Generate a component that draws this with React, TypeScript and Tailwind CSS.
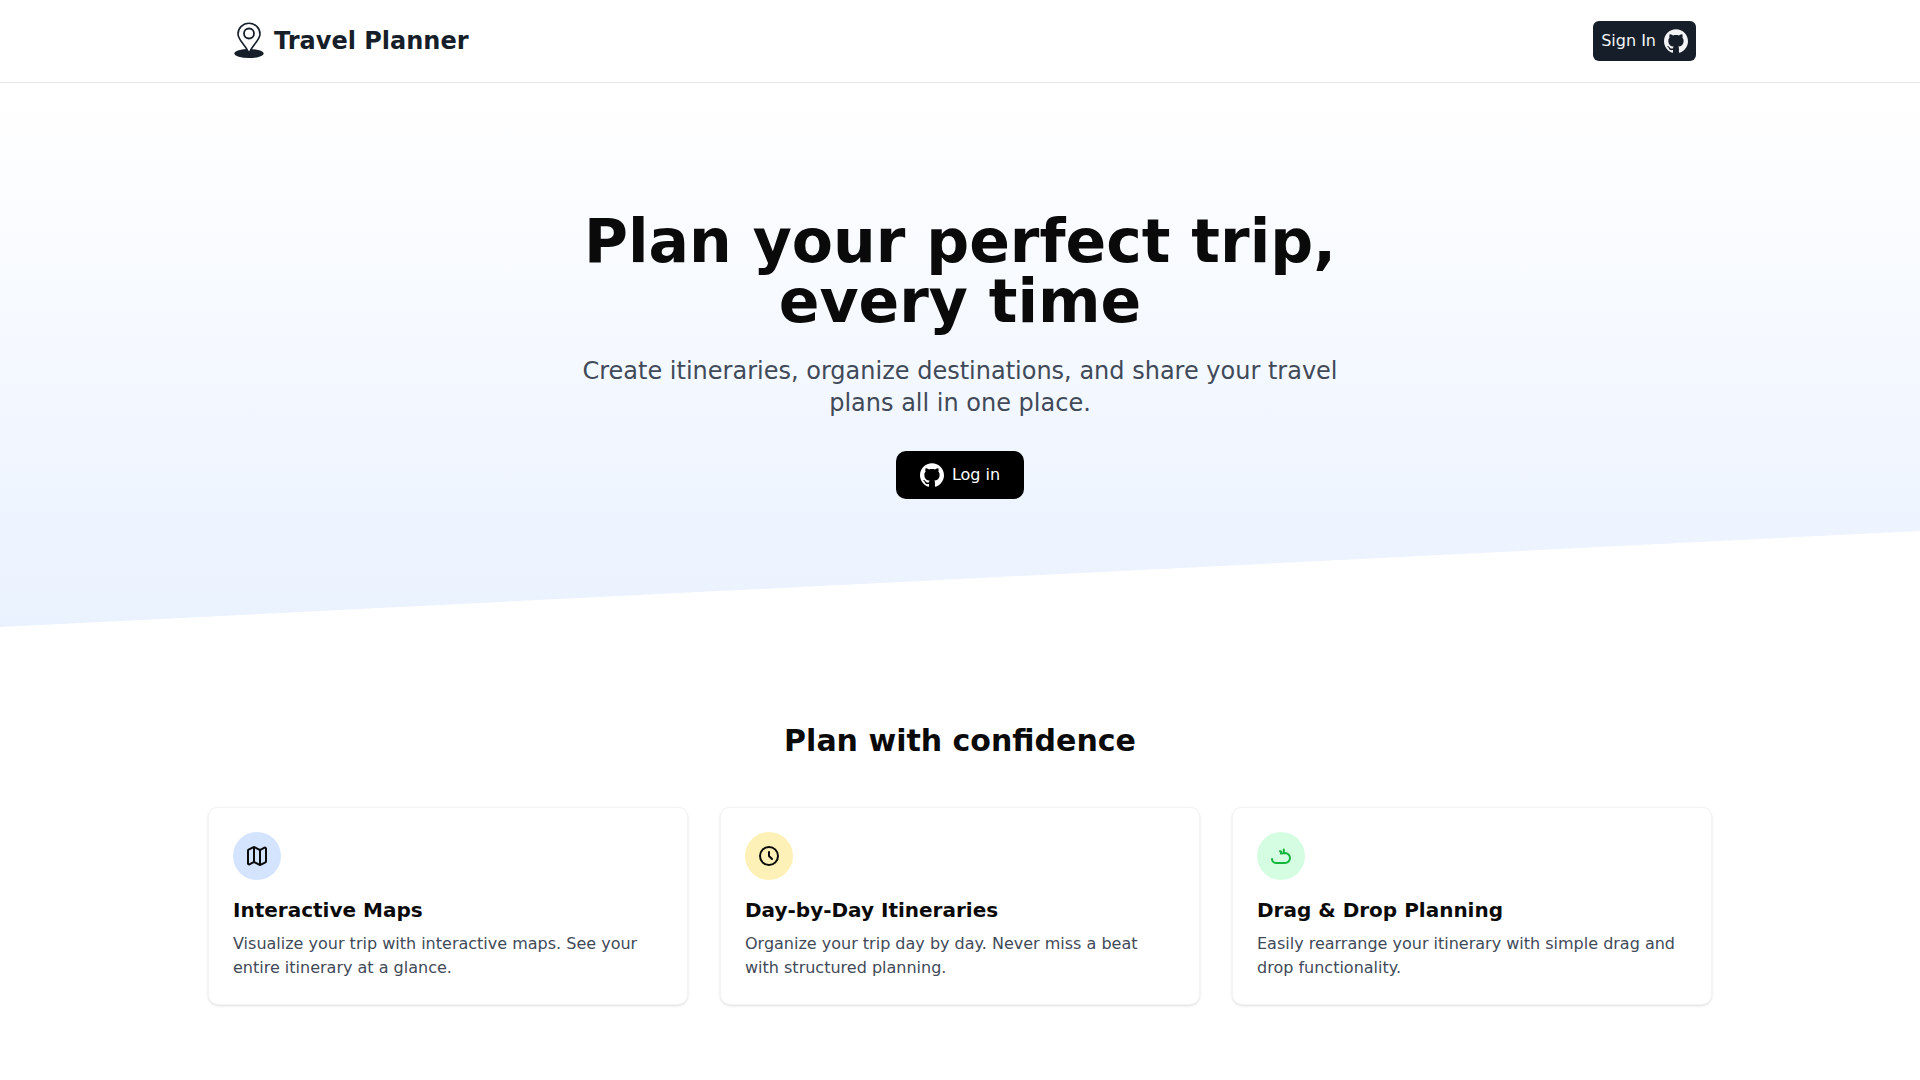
import type { ReactNode } from "react";
import { Map as MapIcon } from "lucide-react";

function LogoPin() {
  return (
    <svg viewBox="0 0 50 50" className="size-[50px]" fill="none" aria-hidden="true">
      <ellipse cx="25" cy="37.5" rx="14.6" ry="4.6" fill="#161e2a" />
      <path
        d="M25 37C21 28.5 14 24 14 18A11 10.8 0 0 1 36 18C36 24 29 28.5 25 37z"
        fill="#fff"
        stroke="#161e2a"
        strokeWidth="1.6"
      />
      <circle cx="25" cy="17.5" r="5" stroke="#161e2a" strokeWidth="1.8" />
    </svg>
  );
}

function GithubMark() {
  return (
    <svg viewBox="0 0 24 24" className="size-6" fill="currentColor" aria-hidden="true">
      <path d="M12 .297c-6.63 0-12 5.373-12 12 0 5.303 3.438 9.8 8.205 11.385.6.113.82-.258.82-.577 0-.285-.01-1.04-.015-2.04-3.338.724-4.042-1.61-4.042-1.61C4.422 18.07 3.633 17.7 3.633 17.7c-1.087-.744.084-.729.084-.729 1.205.084 1.838 1.236 1.838 1.236 1.07 1.835 2.809 1.305 3.495.998.108-.776.417-1.305.76-1.605-2.665-.3-5.466-1.332-5.466-5.93 0-1.31.465-2.38 1.235-3.22-.135-.303-.54-1.523.105-3.176 0 0 1.005-.322 3.3 1.23.96-.267 1.98-.399 3-.405 1.02.006 2.04.138 3 .405 2.28-1.552 3.285-1.23 3.285-1.23.645 1.653.24 2.873.12 3.176.765.84 1.23 1.91 1.23 3.22 0 4.61-2.805 5.625-5.475 5.92.42.36.81 1.096.81 2.22 0 1.606-.015 2.896-.015 3.286 0 .315.21.69.825.57C20.565 22.092 24 17.592 24 12.297c0-6.627-5.373-12-12-12" />
    </svg>
  );
}

function OutlineIcon({ path, className }: { path: string; className?: string }) {
  return (
    <svg
      viewBox="0 0 24 24"
      className={className}
      fill="none"
      stroke="currentColor"
      strokeWidth="2"
      strokeLinecap="round"
      strokeLinejoin="round"
      aria-hidden="true"
    >
      <path d={path} />
    </svg>
  );
}

type Feature = { title: string; text: string; tint: string; icon: ReactNode };

const features: Feature[] = [
  {
    title: "Interactive Maps",
    text: "Visualize your trip with interactive maps. See your entire itinerary at a glance.",
    tint: "bg-[#d4e4fe]",
    icon: <MapIcon className="size-6" />,
  },
  {
    title: "Day-by-Day Itineraries",
    text: "Organize your trip day by day. Never miss a beat with structured planning.",
    tint: "bg-[#fef1b8]",
    icon: <OutlineIcon className="size-6" path="M12 8v4l3 3M21 12a9 9 0 1 1-18 0 9 9 0 0 1 18 0z" />,
  },
  {
    title: "Drag & Drop Planning",
    text: "Easily rearrange your itinerary with simple drag and drop functionality.",
    tint: "bg-[#d5fde1]",
    icon: (
      <OutlineIcon
        className="size-6 text-[#14b53d]"
        path="M3 15a4 4 0 0 0 4 4h9a5 5 0 1 0-.1-9.999L12 9.5V7.5L11 7.2M14.8 5.5V9"
      />
    ),
  },
];

function FeatureCard({ title, text, tint, icon }: Feature) {
  return (
    <article className="rounded-[10px] border border-gray-100 bg-white p-6 shadow-sm">
      <div className={`mb-4 flex size-12 items-center justify-center rounded-full ${tint}`}>{icon}</div>
      <h3 className="mb-2 text-xl font-bold">{title}</h3>
      <p className="text-[#414a58]">{text}</p>
    </article>
  );
}

export default function App() {
  return (
    <div className="min-h-screen bg-white font-['DejaVu_Sans',sans-serif] text-neutral-950">
      <nav className="border-b border-gray-200 bg-white py-4">
        <div className="mx-auto flex max-w-[1536px] items-center justify-between px-8">
          <a href="#" className="flex items-center text-2xl font-bold text-[#161e2a]">
            <LogoPin />
            Travel Planner
          </a>
          <button type="button" className="flex items-center gap-2 rounded-md bg-[#161e2a] p-2 text-gray-100">
            Sign In
            <GithubMark />
          </button>
        </div>
      </nav>

      <main>
        <section className="relative bg-linear-to-b from-white to-[#eaf2ff] px-4 py-32">
          <div className="mx-auto flex max-w-3xl flex-col items-center text-center">
            <h1 className="text-6xl leading-none font-bold">Plan your perfect trip, every time</h1>
            <p className="mt-6 text-2xl text-[#414a58]">
              Create itineraries, organize destinations, and share your travel plans all in one place.
            </p>
            <button
              type="button"
              className="mt-8 flex items-center gap-2 rounded-[10px] bg-black px-6 py-3 text-white"
            >
              <GithubMark />
              Log in
            </button>
          </div>
          <div className="absolute inset-x-0 bottom-0 h-24 bg-white [clip-path:polygon(0_100%,100%_0,100%_100%)]" />
        </section>

        <section className="mx-auto max-w-[1536px] px-4 pt-24 pb-16">
          <h2 className="mb-12 text-center text-3xl font-bold">Plan with confidence</h2>
          <div className="grid gap-8 md:grid-cols-3">
            {features.map((feature) => (
              <FeatureCard key={feature.title} {...feature} />
            ))}
          </div>
        </section>
      </main>
    </div>
  );
}
